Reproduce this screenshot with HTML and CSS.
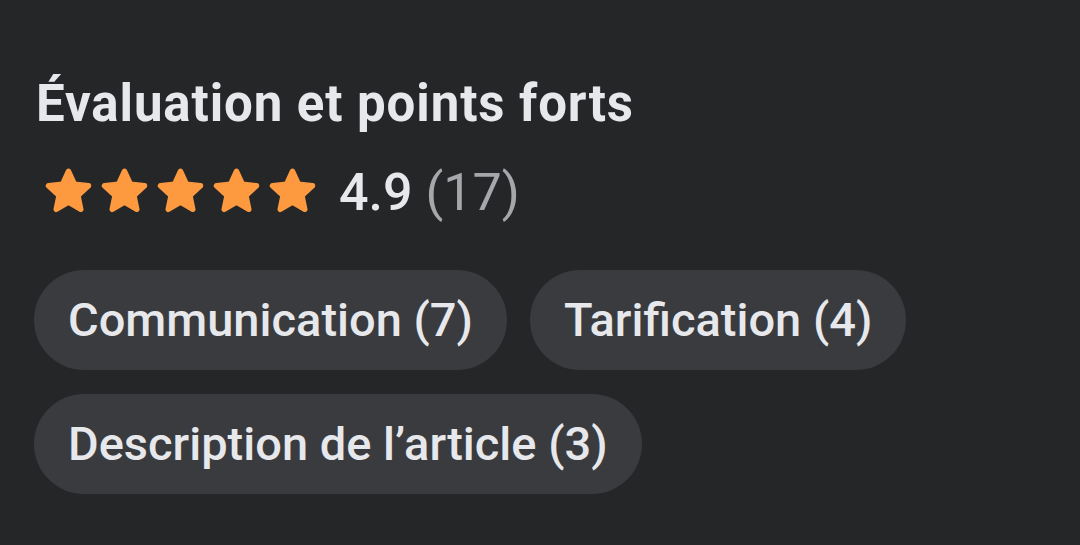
FILE: index.html
```html
<!DOCTYPE html>
<html lang="fr">
<head>
<meta charset="utf-8">
<link rel="stylesheet" href="styles.css">
</head>
<body>
<section class="panel">
  <h2 class="title">Évaluation et points forts</h2>
  <div class="rating">
    <div class="stars">
      <svg class="star" viewBox="0 0 24 24"><path d="M12 2.8l2.7 5.9 6.4.7-4.8 4.4 1.3 6.3L12 16.9l-5.6 3.2 1.3-6.3-4.8-4.4 6.4-.7z"/></svg>
      <svg class="star" viewBox="0 0 24 24"><path d="M12 2.8l2.7 5.9 6.4.7-4.8 4.4 1.3 6.3L12 16.9l-5.6 3.2 1.3-6.3-4.8-4.4 6.4-.7z"/></svg>
      <svg class="star" viewBox="0 0 24 24"><path d="M12 2.8l2.7 5.9 6.4.7-4.8 4.4 1.3 6.3L12 16.9l-5.6 3.2 1.3-6.3-4.8-4.4 6.4-.7z"/></svg>
      <svg class="star" viewBox="0 0 24 24"><path d="M12 2.8l2.7 5.9 6.4.7-4.8 4.4 1.3 6.3L12 16.9l-5.6 3.2 1.3-6.3-4.8-4.4 6.4-.7z"/></svg>
      <svg class="star" viewBox="0 0 24 24"><path d="M12 2.8l2.7 5.9 6.4.7-4.8 4.4 1.3 6.3L12 16.9l-5.6 3.2 1.3-6.3-4.8-4.4 6.4-.7z"/></svg>
    </div>
    <span class="score">4.9</span>
    <span class="count">(17)</span>
  </div>
  <div class="chips">
    <span class="chip">Communication (7)</span>
    <span class="chip">Tarification (4)</span>
    <span class="chip">Description de l’article (3)</span>
  </div>
</section>
</body>
</html>
```
FILE: styles.css
```css
html, body {
  margin: 0;
  padding: 0;
  background: #252628;
  height: 100%;
}
body {
  font-family: Roboto, "Noto Sans", sans-serif;
  color: #e7e8ec;
}
.panel {
  padding: 76px 0 0 34px;
}
.title {
  margin: 0 0 0 2px;
  font-size: 51px;
  line-height: 56px;
  font-weight: 700;
  letter-spacing: 0.9px;
}
.rating {
  display: flex;
  align-items: center;
  margin: 33px 0 0 8px;
  height: 56px;
}
.stars {
  display: flex;
  gap: 3px;
  margin-top: -3px;
}
.star {
  width: 53px;
  height: 53px;
  display: block;
}
.star path {
  fill: #fd9a40;
  stroke: #fd9a40;
  stroke-width: 2.4;
  stroke-linejoin: round;
}
.score {
  margin-left: 20px;
  font-size: 52px;
  font-weight: 500;
  line-height: 56px;
}
.count {
  margin-left: 13px;
  font-size: 52px;
  font-weight: 400;
  line-height: 56px;
  color: #a6a7ab;
}
.chips {
  display: flex;
  flex-wrap: wrap;
  gap: 24px 23px;
  margin-top: 49px;
  width: 900px;
}
.chip {
  display: inline-flex;
  align-items: center;
  height: 100px;
  padding: 0 34px;
  border-radius: 50px;
  background: #3a3b3e;
  font-size: 47px;
  font-weight: 500;
  line-height: 56px;
}
```
